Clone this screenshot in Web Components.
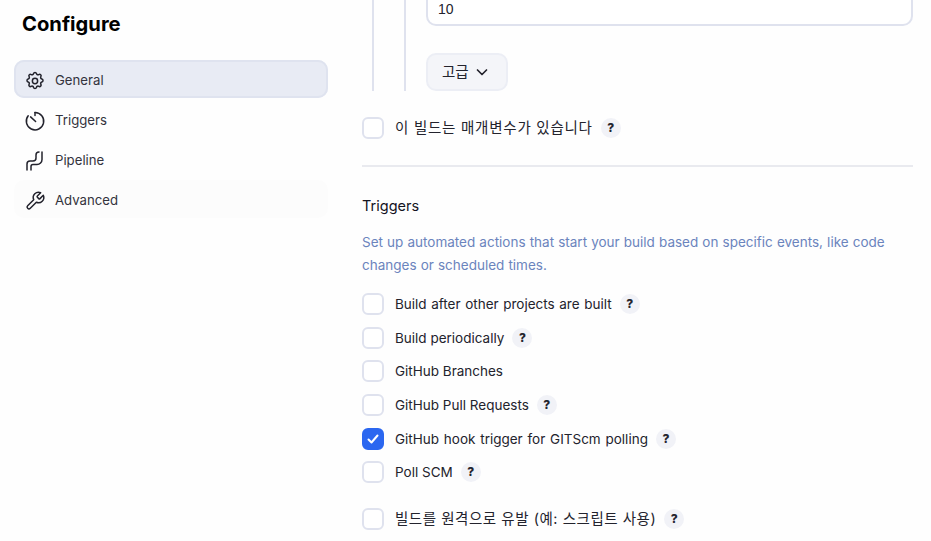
<!DOCTYPE html>
<html lang="ko"><head><meta charset="utf-8">
<style>
html,body{margin:0;height:100%;overflow:hidden;background:#fefefe}
body{font:14px/1.5 Inter,"Noto Sans CJK KR",sans-serif;color:#14141f}
</style></head><body>
<config-page>
<side-nav slot="side">
  <nav-item active label="General" icon="gear"></nav-item>
  <nav-item label="Triggers" icon="timer"></nav-item>
  <nav-item label="Pipeline" icon="pipe"></nav-item>
  <nav-item hover label="Advanced" icon="wrench"></nav-item>
</side-nav>
<config-main slot="main"></config-main>
</config-page>
<script>
const ICONS={
gear:['-1.7 -1.7 27.4 27.4','<path d="M10.3 3.6c.4-1.8 3-1.8 3.4 0a1.75 1.75 0 0 0 2.6 1.1c1.6-1 3.4.8 2.4 2.4a1.75 1.75 0 0 0 1.1 2.6c1.8.4 1.8 3 0 3.4a1.75 1.75 0 0 0-1.1 2.6c1 1.6-.8 3.4-2.4 2.4a1.75 1.75 0 0 0-2.6 1.1c-.4 1.8-3 1.8-3.4 0a1.75 1.75 0 0 0-2.6-1.1c-1.6 1-3.4-.8-2.4-2.4a1.75 1.75 0 0 0-1.1-2.6c-1.8-.4-1.8-3 0-3.4a1.75 1.75 0 0 0 1.1-2.6c-1-1.6.8-3.4 2.4-2.4a1.75 1.75 0 0 0 2.6-1.1z"/><circle cx="12" cy="12" r="3"/>'],
timer:['0 0 24 24','<path d="M12 3.5a8.7 8.7 0 1 1-6.8 3.3"/><path d="M12 3.5v3"/><path d="M7.6 7.9l5 4.6"/>'],
pipe:['0 0 24 24','<path d="M4 21v-6a3 3 0 0 1 3-3h3a3 3 0 0 0 3-3V6a3 3 0 0 1 3-3"/><path d="M8 21v-3.5a2 2 0 0 1 2-2h4a5 5 0 0 0 5-5V3"/>'],
wrench:['-1.7 -1.7 27.4 27.4','<path d="M14.7 6.3a1 1 0 0 0 0 1.4l1.6 1.6a1 1 0 0 0 1.4 0l3.77-3.77a6 6 0 0 1-7.94 7.94l-6.91 6.91a2.12 2.12 0 0 1-3-3l6.91-6.91a6 6 0 0 1 7.94-7.94l-3.76 3.76z"/>']
};
function def(name,css,html){
  customElements.define(name,class extends HTMLElement{
    connectedCallback(){
      if(this.shadowRoot)return;
      const s=this.attachShadow({mode:'open'});
      s.innerHTML='<style>'+css+'</style>'+(typeof html==='function'?html(this):html);
    }
  });
}
def('config-page',':host{display:flex;height:541px;overflow:hidden}.s{width:314px;margin-left:14px;flex:none}.m{margin-left:34px;width:551px;flex:none}',
 '<div class="s"><slot name="side"></slot></div><div class="m"><slot name="main"></slot></div>');
def('side-nav',':host{display:block}h1{font-size:20.2px;font-weight:700;line-height:24px;margin:12px 0 24px 8px;color:#000}.l{display:flex;flex-direction:column;gap:2px}',
 '<h1>Configure</h1><div class="l"><slot></slot></div>');
def('nav-item',`:host{display:flex;align-items:center;gap:8px;box-sizing:border-box;height:38px;padding:4px 0 0 9px;border-radius:10px;color:#33333d;font-size:13.2px}
:host([active]){background:#e8ebf4;box-shadow:inset 0 0 0 2px #dfe3ef}
:host([hover]){background:#fcfcfc}
svg{width:24px;height:24px;fill:none;stroke:#23232d;stroke-width:1.5;stroke-linecap:round;stroke-linejoin:round}
svg *{vector-effect:non-scaling-stroke}`,
 h=>{const i=ICONS[h.getAttribute('icon')];return `<svg viewBox="${i[0]}">${i[1]}</svg><span>${h.getAttribute('label')}</span>`});
def('help-badge',':host{display:inline-flex;align-items:center;justify-content:center;width:20px;height:20px;border-radius:50%;background:#f1f2f7;font-size:12px;font-weight:800;letter-spacing:0;word-spacing:0;line-height:1;color:#25252f;flex:none}','?');
def('check-row',`:host{display:flex;align-items:center;height:22px;font-size:13.5px;word-spacing:1px;color:#23232d}
:host([ko]){font-size:14.5px;word-spacing:0}
.b{width:18px;height:18px;border:2px solid #dfe2ee;border-radius:6px;background:#fff;flex:none;margin-right:11px;display:flex;align-items:center;justify-content:center}
:host([checked]) .b{background:#2b67f0;border-color:#2b67f0}
svg{width:14px;height:14px;fill:none;stroke:#fff;stroke-width:2;stroke-linecap:round;stroke-linejoin:round}
help-badge{margin-left:8px}`,
 h=>`<span class="b">${h.hasAttribute('checked')?'<svg viewBox="0 0 14 14"><path d="M2.5 7.5l3 3 6-7"/></svg>':''}</span><span>${h.getAttribute('label')}</span>${h.hasAttribute('help')?'<help-badge></help-badge>':''}`);
def('config-main',`:host{display:block}
.nest{display:flex;height:91px;margin-left:10px}
.rail{width:2px;background:#dfe2ee;flex:none}
.col{flex:1;margin-left:30px;display:flex;height:91px}
.cell{flex:1;margin-left:20px}
.input{height:38px;margin-top:-12px;box-sizing:border-box;border:2px solid #dfe2ee;border-top:0;border-radius:0 0 10px 10px;background:#fff;display:flex;align-items:flex-end;padding:0 10px 5px;font-family:"Liberation Sans",Inter,sans-serif;font-size:14px;color:#23232d;line-height:20px}
.btn{display:inline-flex;align-items:center;gap:6.5px;box-sizing:border-box;width:82px;height:38px;margin-top:27px;border:2px solid #eceef5;border-radius:10px;background:#f4f5f9;padding-left:14px;font-size:14.5px;color:#23232d}
.btn svg{width:14px;height:14px;fill:none;stroke:#23232d;stroke-width:1.7;stroke-linecap:round;stroke-linejoin:round}
.p{margin-top:26px;letter-spacing:.75px}
hr{border:0;height:2px;background:#e9eaef;margin:26px 0 27px}
h2{font-size:14.5px;font-weight:400;line-height:24px;margin:0 0 13px;color:#14141f}
.d{font-size:13.5px;word-spacing:.33px;line-height:23px;color:#6b84bd;margin:0 0 16px}
.rows{display:flex;flex-direction:column;gap:11.67px}
.tight{word-spacing:0}
.wide{word-spacing:.8px}
.last{margin-top:25px;letter-spacing:.53px}`,
`<div class="nest"><div class="rail"></div><div class="col"><div class="rail"></div><div class="cell"><div class="input">10</div><div class="btn">고급<svg viewBox="0 0 14 14"><path d="M2.5 5l4.5 4.5L11.5 5"/></svg></div></div></div></div>
<check-row class="p" ko label="이 빌드는 매개변수가 있습니다" help></check-row>
<hr>
<h2>Triggers</h2>
<p class="d">Set up automated actions that start your build based on specific events, like code changes or scheduled times.</p>
<div class="rows">
<check-row class="wide" label="Build after other projects are built" help></check-row>
<check-row class="tight" label="Build periodically" help></check-row>
<check-row class="tight" label="GitHub Branches"></check-row>
<check-row class="tight" label="GitHub Pull Requests" help></check-row>
<check-row checked label="GitHub hook trigger for GITScm polling" help></check-row>
<check-row class="tight" label="Poll SCM" help></check-row>
</div>
<check-row class="last" ko label="빌드를 원격으로 유발 (예: 스크립트 사용)" help></check-row>`);
</script>
</body></html>
